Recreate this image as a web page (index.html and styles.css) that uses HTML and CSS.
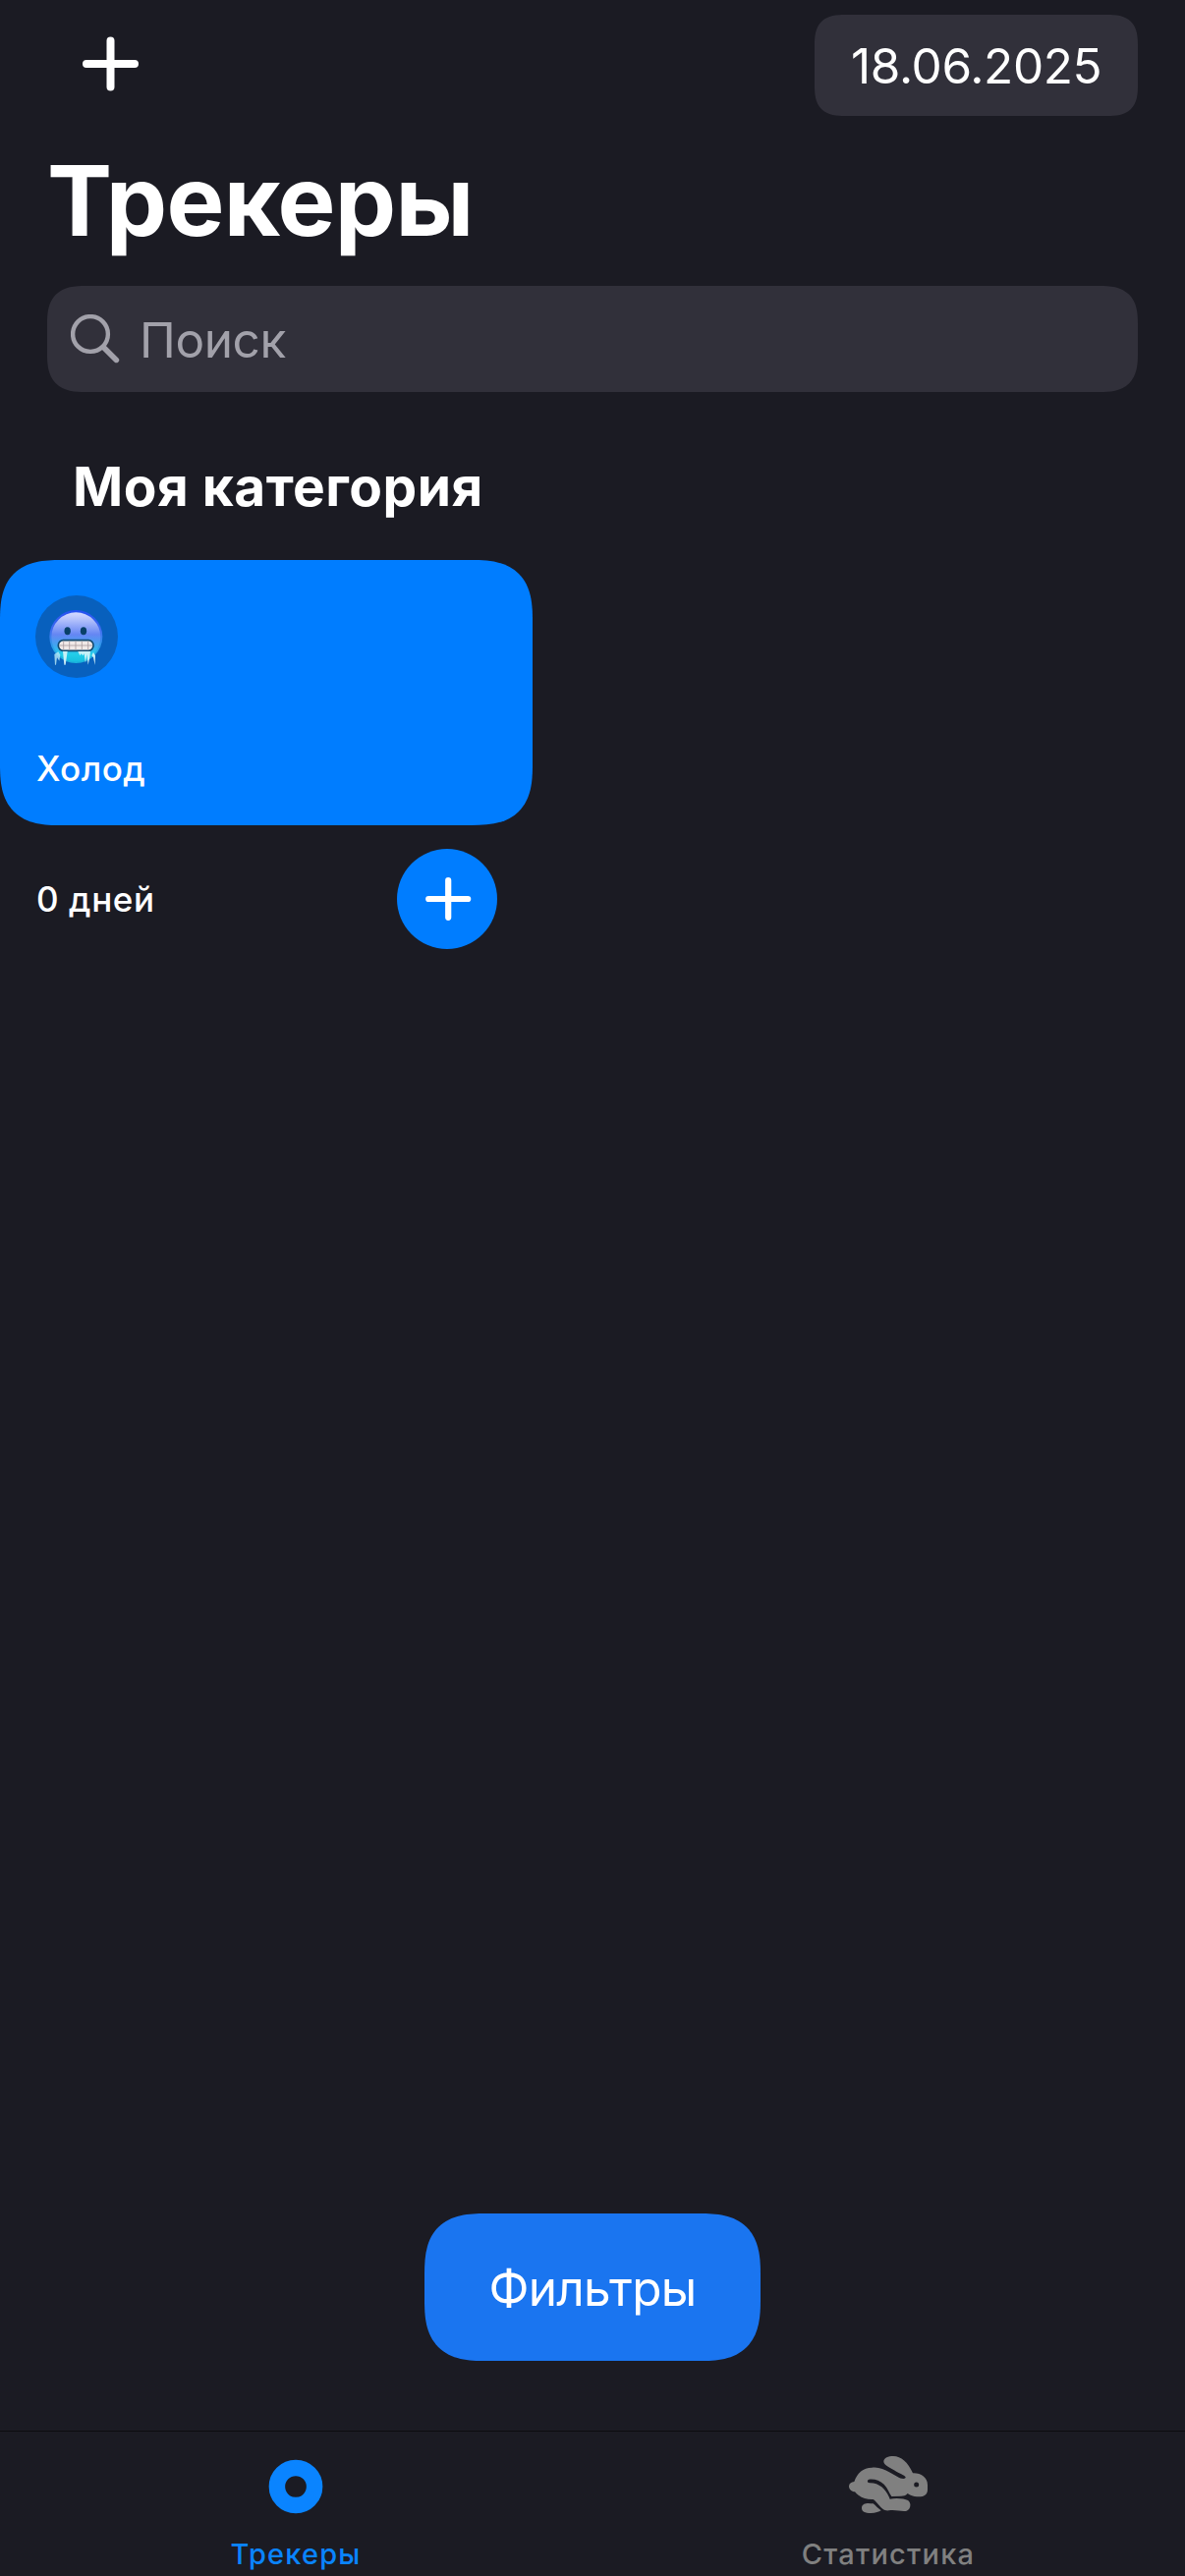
FILE: index.html
```html
<!DOCTYPE html>
<html lang="ru">
<head>
<meta charset="utf-8">
<title>Трекеры</title>
<link rel="stylesheet" href="styles.css">
</head>
<body>
<div class="app">
  <header class="topbar">
    <button class="add" aria-label="Добавить">
      <svg width="58" height="56" viewBox="0 0 58 56"><path d="M29.500 4.500V51.500M5 28H54" fill="none" stroke="#fff" stroke-width="8" stroke-linecap="round"/></svg>
    </button>
    <div class="date">18.06.2025</div>
  </header>

  <h1 class="title">Трекеры</h1>

  <div class="search">
    <svg class="search-icon" width="50" height="50" viewBox="0 0 50 50"><circle cx="20" cy="20" r="17.9" fill="none" stroke="#a2a1aa" stroke-width="4.4"/><path d="M33.4 33.4L46.4 46.4" stroke="#a2a1aa" stroke-width="5.6" stroke-linecap="round"/></svg>
    <span class="search-text">Поиск</span>
  </div>

  <main class="content">
    <h2 class="category">Моя категория</h2>
    <article class="tracker">
      <div class="card">
        <div class="emoji">
          <svg width="84" height="84" viewBox="0 0 252 252">
            <defs>
              <linearGradient id="skin" x1="0" y1="0" x2="0" y2="1">
                <stop offset="0" stop-color="#d6dcff"/>
                <stop offset=".2" stop-color="#a6b7fa"/>
                <stop offset=".45" stop-color="#6586f3"/>
                <stop offset=".68" stop-color="#3fa6f0"/>
                <stop offset=".85" stop-color="#22cde9"/>
                <stop offset="1" stop-color="#18bfe0"/>
              </linearGradient>
              <linearGradient id="rim" x1="0" y1="0" x2="0" y2="1">
                <stop offset="0" stop-color="#2450f0"/>
                <stop offset=".4" stop-color="#4270f0"/>
                <stop offset=".75" stop-color="#2aa5e8"/>
                <stop offset="1" stop-color="#18b5dc"/>
              </linearGradient>
            </defs>
            <circle cx="124" cy="126" r="81" fill="url(#rim)"/>
            <circle cx="124" cy="127" r="75" fill="url(#skin)"/>
            <ellipse cx="98" cy="109" rx="9.500" ry="12" fill="#084069"/>
            <ellipse cx="147" cy="109" rx="9.500" ry="12" fill="#084069"/>
            <rect x="70" y="137" width="107" height="32" rx="15" fill="#f0e9e7" stroke="#124a70" stroke-width="5"/>
            <path d="M86 139V167M104 139V167M123 139V167M142 139V167M161 139V167M72 153H175" stroke="#a99c9f" stroke-width="2.500"/>
            <path d="M58 180L60 212L63 212L66 190L73 200L76 182L70 172Z" fill="#b9eaf7" opacity=".8"/>
            <path d="M84 171H98L92 212H88ZM130 171H168L166 190L161 212L157 180L153 206L149 178L145 184L140 178L136 184ZM177 174L183 184L182 213L177 190L172 184Z" fill="#d7f5fa" opacity=".9"/>
          </svg>
        </div>
        <div class="name">Холод</div>
      </div>
      <div class="progress">
        <span class="days">0 дней</span>
        <button class="done" aria-label="Отметить">
          <svg width="102" height="102" viewBox="0 0 102 102"><path d="M52.200 32.200V69.800M32.200 51H72.200" fill="none" stroke="#fff" stroke-width="6.200" stroke-linecap="round"/></svg>
        </button>
      </div>
    </article>
  </main>

  <button class="filters">Фильтры</button>

  <nav class="tabs">
    <div class="tab tab-active">
      <svg width="100" height="80" viewBox="0 0 100 80"><circle cx="50" cy="41" r="19.100" fill="none" stroke="#0a84ff" stroke-width="16.500"/></svg>
      <span>Трекеры</span>
    </div>
    <div class="tab">
      <svg width="100" height="80" viewBox="-3 0 300 240">
        <g fill="#808080">
          <path d="M133 46C134 35 147 30 162 30C187 31 206 47 222 82C246 81 267 95 267 118V132C267 147 257 154 241 154C226 154 216 151 206 144C200 151 193 152 186 152L157 153C150 143 145 127 134 116C121 104 105 99 88 101C82 103 82 112 90 112C120 111 141 132 152 161C170 157 196 159 207 165C219 173 215 194 203 197C190 200 169 193 149 196C135 198 126 188 121 182C114 174 106 165 101 162C77 163 58 155 45 139C35 138 27 131 27 122C27 114 34 109 43 108C53 80 70 66 97 65C116 62 135 70 150 79L174 92C184 98 194 101 199 97C202 94 198 91 192 88C176 79 153 68 140 58C135 54 133 50 133 46Z"/>
          <path d="M101 175C87 173 69 171 66 186C65 200 76 204 94 204C108 204 119 200 125 196C116 190 108 180 101 175Z"/>
        </g>
        <circle cx="233" cy="117" r="7.500" fill="#1b1b23"/>
      </svg>
      <span>Статистика</span>
    </div>
  </nav>
</div>
</body>
</html>
```
FILE: styles.css
```css
* {
  box-sizing: border-box;
}

body {
  margin: 0;
  background: #1b1b23;
  color: #fff;
  font-family: Inter, "Liberation Sans", sans-serif;
}

button {
  border: 0;
  padding: 0;
  background: none;
  color: inherit;
  font: inherit;
}

svg {
  display: block;
}

.app {
  display: flex;
  flex-direction: column;
  width: 1206px;
  height: 2622px;
  overflow: hidden;
}

.topbar {
  display: flex;
  justify-content: space-between;
  height: 118px;
  padding: 15px 48px 0 83px;
}

.add {
  display: flex;
  align-items: center;
  height: 100px;
}

.date {
  width: 329px;
  height: 103px;
  padding-left: 37px;
  border-radius: 31px;
  corner-shape: superellipse(1.43);
  background: #31303a;
  font-size: 49.5px;
  line-height: 105px;
  letter-spacing: -0.35px;
}

.title {
  height: 173px;
  margin: 0;
  padding-left: 48px;
  font-size: 99px;
  font-weight: 700;
  line-height: 172px;
  letter-spacing: -0.7px;
}

.search {
  display: flex;
  align-items: center;
  height: 108px;
  margin: 0 48px;
  padding-left: 24px;
  gap: 20px;
  border-radius: 39px;
  corner-shape: superellipse(1.43);
  background: #31303a;
  color: #a2a1aa;
  font-size: 49.5px;
  letter-spacing: -0.4px;
}

.search-text {
  padding-top: 2px;
  line-height: 106px;
}

.content {
  flex: 1;
}

.category {
  height: 171px;
  margin: 0;
  padding: 56px 0 0 74px;
  font-size: 55px;
  font-weight: 700;
  line-height: 80px;
  letter-spacing: 0.5px;
}

.tracker {
  width: 541.5px;
}

.card {
  display: flex;
  flex-direction: column;
  justify-content: space-between;
  height: 270px;
  padding: 36px 36px 31px;
  border-radius: 62px;
  corner-shape: superellipse(1.43);
  background: #007dff;
}

.emoji {
  width: 84px;
  height: 84px;
  border-radius: 50%;
  background: #0860bd;
}

.name,
.days {
  padding-left: 1px;
  font-size: 35px;
  font-weight: 450;
  line-height: 54px;
}

.name {
  letter-spacing: 0.5px;
}

.progress {
  display: flex;
  align-items: center;
  justify-content: space-between;
  padding: 24px 35.5px 0 36px;
}

.days {
  letter-spacing: 0.6px;
}

.done {
  width: 102px;
  height: 102px;
  border-radius: 50%;
  background: #007dff;
}

.filters {
  align-self: center;
  width: 342px;
  height: 150px;
  padding-top: 2px;
  margin-bottom: 71px;
  border-radius: 62px;
  corner-shape: superellipse(1.43);
  background: #1a75f0;
  font-size: 49.5px;
  line-height: 148px;
  letter-spacing: -0.7px;
}

.tabs {
  display: grid;
  grid-template-columns: 1fr 1fr;
  height: 148px;
  border-top: 1px solid #0c0c10;
  color: #808080;
}

.tab {
  display: flex;
  flex-direction: column;
  align-items: center;
  padding: 15px 1px 0 0;
  font-size: 29px;
  font-weight: 450;
  line-height: 60px;
  letter-spacing: 1.2px;
}

.tab-active {
  color: #0a84ff;
}
```
